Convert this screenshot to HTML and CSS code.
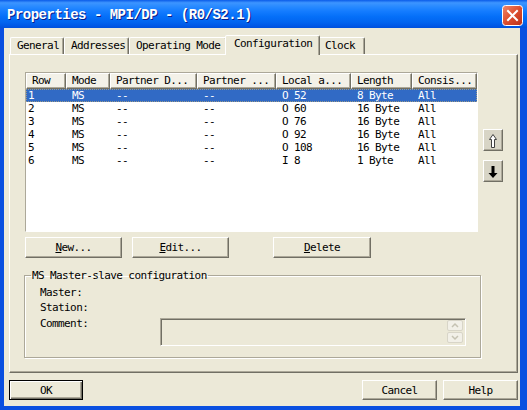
FILE: index.html
```html
<!DOCTYPE html>
<html>
<head>
<meta charset="utf-8">
<link rel="stylesheet" href="styles.css">
</head>
<body>
<div class="win">
  <div class="titlebar">
    <span class="title">Properties - MPI/DP - (R0/S2.1)</span>
    <span class="close">
      <svg width="21" height="21" viewBox="0 0 21 21">
        <defs>
          <linearGradient id="cg" x1="0" y1="0" x2="1" y2="1">
            <stop offset="0" stop-color="#F08A6C"/>
            <stop offset="0.5" stop-color="#DD4E2E"/>
            <stop offset="1" stop-color="#B8301A"/>
          </linearGradient>
        </defs>
        <rect x="0.5" y="0.5" width="20" height="20" rx="3" fill="url(#cg)" stroke="#fff"/>
        <path d="M6 6 L15 15 M15 6 L6 15" stroke="#fff" stroke-width="2" stroke-linecap="square"/>
      </svg>
    </span>
  </div>
  <div class="client">
    <div class="tabs">
      <div class="tab t1">General</div>
      <div class="tab t2">Addresses</div>
      <div class="tab t3">Operating Mode</div>
      <div class="tab t4 sel">Configuration</div>
      <div class="tab t5">Clock</div>
    </div>
    <div class="panel">
      <div class="listarea">
        <div class="list">
          <div class="lrow head">
            <div class="c c1">Row</div>
            <div class="c c2">Mode</div>
            <div class="c c3">Partner D...</div>
            <div class="c c4">Partner ...</div>
            <div class="c c5">Local a...</div>
            <div class="c c6">Length</div>
            <div class="c c7">Consis...</div>
          </div>
          <div class="lrow item selrow">
            <div class="c c1">1</div><div class="c c2">MS</div><div class="c c3">--</div><div class="c c4">--</div><div class="c c5">O 52</div><div class="c c6">8 Byte</div><div class="c c7">All</div>
          </div>
          <div class="lrow item">
            <div class="c c1">2</div><div class="c c2">MS</div><div class="c c3">--</div><div class="c c4">--</div><div class="c c5">O 60</div><div class="c c6">16 Byte</div><div class="c c7">All</div>
          </div>
          <div class="lrow item">
            <div class="c c1">3</div><div class="c c2">MS</div><div class="c c3">--</div><div class="c c4">--</div><div class="c c5">O 76</div><div class="c c6">16 Byte</div><div class="c c7">All</div>
          </div>
          <div class="lrow item">
            <div class="c c1">4</div><div class="c c2">MS</div><div class="c c3">--</div><div class="c c4">--</div><div class="c c5">O 92</div><div class="c c6">16 Byte</div><div class="c c7">All</div>
          </div>
          <div class="lrow item">
            <div class="c c1">5</div><div class="c c2">MS</div><div class="c c3">--</div><div class="c c4">--</div><div class="c c5">O 108</div><div class="c c6">16 Byte</div><div class="c c7">All</div>
          </div>
          <div class="lrow item">
            <div class="c c1">6</div><div class="c c2">MS</div><div class="c c3">--</div><div class="c c4">--</div><div class="c c5">I 8</div><div class="c c6">1 Byte</div><div class="c c7">All</div>
          </div>
        </div>
        <div class="movebtns">
          <div class="btn mbtn">
            <svg width="18" height="20" viewBox="0 0 18 20">
              <path d="M9 4.5 L12.5 9.5 L10.5 9.5 L10.5 17.5 L7.5 17.5 L7.5 9.5 L5.5 9.5 Z" fill="#fff" stroke="#404040" stroke-width="1"/>
            </svg>
          </div>
          <div class="btn mbtn">
            <svg width="18" height="20" viewBox="0 0 18 20">
              <path d="M7.5 5 L10.5 5 L10.5 12 L13.5 12 L9 17 L4.5 12 L7.5 12 Z" fill="#000"/>
            </svg>
          </div>
        </div>
      </div>
      <div class="btnrow">
        <div class="btn b-new"><u>N</u>ew...</div>
        <div class="btn b-edit"><u>E</u>dit...</div>
        <div class="btn b-del"><u>D</u>elete</div>
      </div>
      <fieldset class="group">
        <legend>MS Master-slave configuration</legend>
        <div class="fields">
          <div class="lbl wide">Master:</div>
          <div class="lbl wide">Station:</div>
          <div class="lbl">Comment:</div>
          <div class="comment">
            <div class="spin">
              <div class="sbtn">
                <svg width="14" height="9" viewBox="0 0 14 9"><path d="M4 6 L7 3 L10 6" fill="none" stroke="#C5C2B2" stroke-width="1.5"/></svg>
              </div>
              <div class="sbtn">
                <svg width="14" height="9" viewBox="0 0 14 9"><path d="M4 3 L7 6 L10 3" fill="none" stroke="#C5C2B2" stroke-width="1.5"/></svg>
              </div>
            </div>
          </div>
        </div>
      </fieldset>
    </div>
    <div class="footer">
      <div class="btn b-ok">OK</div>
      <div class="btn b-cancel">Cancel</div>
      <div class="btn b-help">Help</div>
    </div>
  </div>
</div>
</body>
</html>
```

FILE: styles.css
```css
* { box-sizing: border-box; }
html, body { margin: 0; width: 527px; height: 410px; overflow: hidden; }
body {
  background: #0A4FE0;
  font-family: "DejaVu Sans Mono", "Liberation Mono", monospace;
  font-size: 11px;
  letter-spacing: -0.6px;
  color: #000;
}
.win { display: flex; flex-direction: column; height: 410px; }

.titlebar {
  height: 28px;
  flex: none;
  display: flex;
  align-items: center;
  padding: 0 4px 0 7px;
  background: linear-gradient(to bottom, #0A5BE8 0%, #3D95FF 10%, #2A8BFF 22%, #147CFF 40%, #046FF8 60%, #0264EF 80%, #0058E6 92%, #0050DC 100%);
}
.title {
  flex: 1;
  font-family: "Liberation Mono", "DejaVu Sans Mono", monospace;
  font-weight: bold;
  font-size: 14px;
  letter-spacing: -0.5px;
  color: #fff;
  text-shadow: 1px 1px 0 #0A1E8A;
  padding-top: 1px;
}
.close { display: flex; width: 21px; height: 21px; margin-top: 2px; }

.client {
  flex: 1;
  background: #ECE9D8;
  margin: 0 7px 4px 4px;
  padding: 9px 2px 0 5px;
  display: flex;
  flex-direction: column;
}

.tabs { display: flex; align-items: flex-end; height: 17px; padding-left: 1px; }
.tab {
  height: 17px;
  line-height: 16px;
  padding-left: 6px;
  border: 1px solid;
  border-bottom: none;
  border-color: #fff #716F64 transparent #fff;
  border-radius: 2px 2px 0 0;
  box-shadow: inset -1px 0 0 #ACA899;
  white-space: nowrap;
}
.t1 { width: 54px; }
.t2 { width: 65px; }
.t3 { width: 98px; }
.t4 { width: 91px; }
.t5 { width: 47px; }
.tab.sel {
  position: relative;
  z-index: 1;
  height: 20px;
  margin: 0 -2px -1px -2px;
  width: 95px;
  padding-left: 8px;
  line-height: 15px;
  background: #ECE9D8;
}

.panel {
  height: 319px;
  flex: none;
  border: 1px solid;
  border-color: #fff #716F64 #716F64 #fff;
  box-shadow: inset -1px -1px 0 #ACA899;
  padding: 17px 0 0 15px;
}

.listarea { display: flex; gap: 5px; }
.list {
  width: 453px;
  height: 160px;
  background: #fff;
  border: 1px solid;
  border-color: #ACA899 #fff #fff #ACA899;
}
.lrow { display: flex; }
.c { white-space: nowrap; overflow: hidden; }
.c1 { width: 40px; }
.c2 { width: 44px; }
.c3 { width: 87px; }
.c4 { width: 79px; }
.c5 { width: 75px; }
.c6 { width: 61px; }
.c7 { width: 65px; }

.head { height: 16px; }
.head .c {
  height: 16px;
  line-height: 14px;
  padding-left: 5px;
  background: #F3F1E8;
  border: 1px solid;
  border-color: #fff #716F64 #716F64 #fff;
  box-shadow: inset -1px -1px 0 #ACA899;
}
.item { height: 13px; line-height: 13px; }
.item .c { padding-left: 6px; }
.item .c1 { padding-left: 2px; }
.selrow {
  background: #316AC5;
  color: #fff;
  outline: 1px dotted #9A9A8A;
  outline-offset: -1px;
}

.movebtns { display: flex; flex-direction: column; gap: 9px; padding-top: 57px; }

.btn {
  display: flex;
  align-items: center;
  justify-content: center;
  background: #ECE9D8;
  border: 1px solid;
  border-color: #fff #716F64 #716F64 #fff;
  box-shadow: inset -1px -1px 0 #ACA899;
}
.btn u { text-decoration: underline; text-underline-offset: 1px; }
.mbtn { width: 20px; height: 22px; background: #D8D5C6; }

.btnrow { display: flex; margin-top: 5px; height: 21px; }
.b-new { width: 97px; }
.b-edit { width: 97px; margin-left: 10px; }
.b-del { width: 98px; margin-left: 44px; }

.group {
  margin: 11px 0 0 -1px;
  padding: 0;
  width: 457px;
  height: 89px;
  border: 1px solid #ACA899;
  box-shadow: inset 1px 1px 0 #fff, 1px 1px 0 #fff;
}
.group legend {
  margin-left: 6px;
  padding: 0 1px;
  line-height: 13px;
}
.fields {
  display: grid;
  grid-template-columns: 120px 306px;
  grid-template-rows: 15px 16px auto;
  padding: 3px 0 0 15px;
}
.lbl { line-height: 15px; }
.lbl.wide { grid-column: 1 / 3; }
.fields .lbl:nth-child(3) { line-height: 13px; margin-top: 1px; }
.comment {
  margin-top: 2px;
  height: 28px;
  border: 1px solid;
  border-color: #ACA899 #fff #fff #ACA899;
  box-shadow: inset 1px 1px 0 #716F64;
  display: flex;
  justify-content: flex-end;
  padding: 1px 2px 0 0;
}
.spin { display: flex; flex-direction: column; gap: 1px; }
.sbtn {
  width: 16px;
  height: 11px;
  display: flex;
  align-items: center;
  justify-content: center;
  border: 1px solid #D8D5C8;
  border-radius: 2px;
  background: #F2F0E8;
}

.footer { display: flex; margin-top: 7px; height: 20px; }
.b-ok {
  width: 74px;
  border: 1px solid #000;
  box-shadow: inset 1px 1px 0 #fff, inset -1px -1px 0 #716F64, inset -2px -2px 0 #ACA899;
}
.b-cancel { width: 75px; margin-left: auto; }
.b-help { width: 75px; margin-left: 6px; }
```
